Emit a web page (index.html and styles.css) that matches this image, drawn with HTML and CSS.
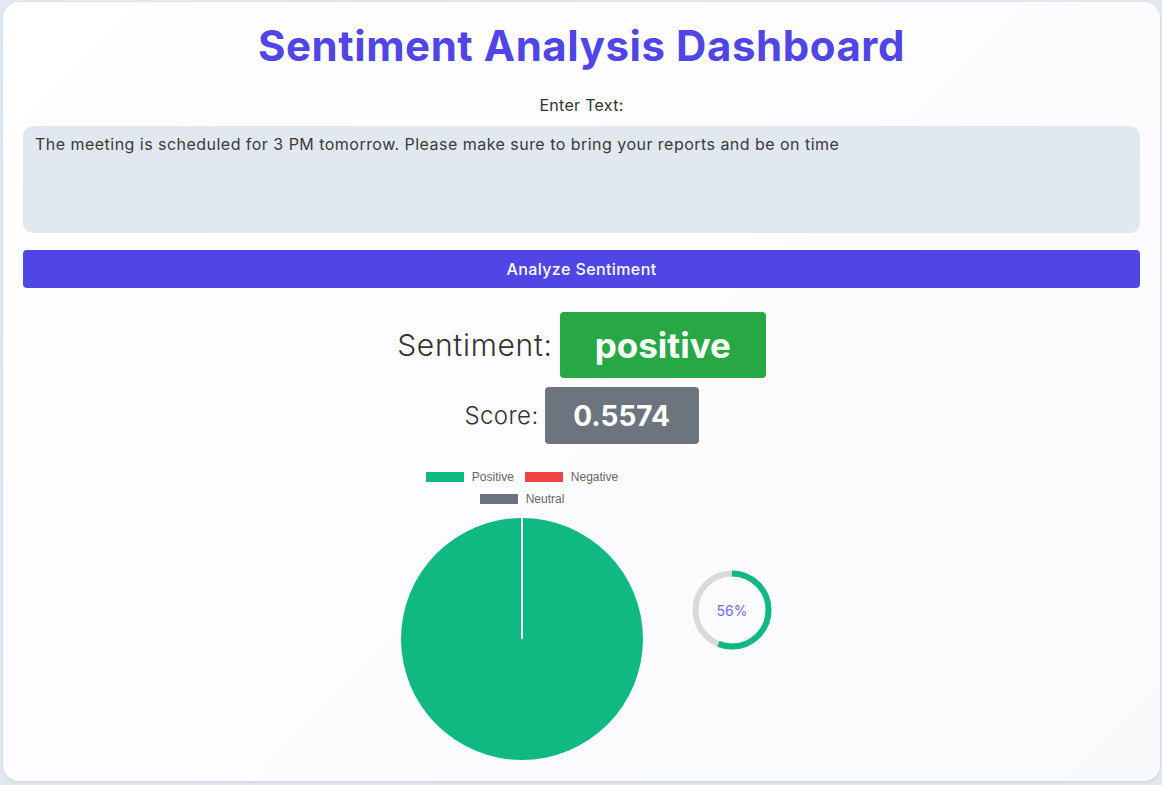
FILE: index.html
```html
<!DOCTYPE html>
<html lang="en">
<head>
<meta charset="utf-8">
<title>Sentiment Analysis Dashboard</title>
<link rel="stylesheet" href="styles.css">
</head>
<body>
<main class="card">
  <h1 class="title">Sentiment Analysis Dashboard</h1>
  <label class="label" for="txt">Enter Text:</label>
  <textarea id="txt" class="input">The meeting is scheduled for 3 PM tomorrow. Please make sure to bring your reports and be on time</textarea>
  <button class="btn">Analyze Sentiment</button>

  <div class="result-row sentiment-row">
    <span class="result-label">Sentiment:</span>
    <span class="badge badge-positive">positive</span>
  </div>
  <div class="result-row score-row">
    <span class="result-label score-label">Score:</span>
    <span class="badge badge-score">0.5574</span>
  </div>

  <div class="charts">
    <div class="pie-col">
      <div class="legend">
        <div class="legend-line">
          <span class="legend-item"><span class="swatch sw-pos"></span>Positive</span>
          <span class="legend-item"><span class="swatch sw-neg"></span>Negative</span>
        </div>
        <div class="legend-line">
          <span class="legend-item"><span class="swatch sw-neu"></span>Neutral</span>
        </div>
      </div>
      <svg class="pie" width="242" height="242" viewBox="0 0 242 242">
        <circle cx="121" cy="121" r="121" fill="#10b981"/>
        <line x1="121" y1="0" x2="121" y2="121" stroke="#ffffff" stroke-width="2"/>
      </svg>
    </div>
    <div class="donut">
      <svg width="80" height="80" viewBox="0 0 80 80">
        <circle cx="40" cy="40" r="36.5" fill="none" stroke="#d9d9d9" stroke-width="6"/>
        <circle cx="40" cy="40" r="36.5" fill="none" stroke="#10b981" stroke-width="6"
          stroke-dasharray="128.4 229.3" transform="rotate(-90 40 40)"/>
      </svg>
      <span class="donut-text">56%</span>
    </div>
  </div>
</main>
</body>
</html>
```

FILE: styles.css
```css
* { box-sizing: border-box; }

html, body {
  margin: 0;
  padding: 0;
}

body {
  background: #e2e8f0;
  font-family: Inter, "Noto Sans", sans-serif;
  color: #333;
  min-height: 785px;
  padding: 2px 2px 4px 3px;
}

.card {
  display: flex;
  flex-direction: column;
  align-items: stretch;
  background: linear-gradient(135deg, #ffffff 0%, #fdfcfe 50%, #f8fafc 100%);
  border-radius: 16px;
  box-shadow: 0 1px 3px rgba(15, 23, 42, 0.12);
  padding: 20px 20px 20px 20px;
  min-height: 779px;
}

.title {
  margin: 0;
  text-align: center;
  color: #4f46e5;
  font-size: 42px;
  line-height: 48px;
  font-weight: 700;
  letter-spacing: 0.55px;
}

.label {
  display: block;
  margin-top: 26px;
  text-align: center;
  font-size: 16px;
  line-height: 18px;
  color: #333;
  letter-spacing: 0.3px;
}

.input {
  display: block;
  margin-top: 12px;
  width: 100%;
  height: 107px;
  background: #e2e8f0;
  border: none;
  border-radius: 10px;
  padding: 7px 12px;
  font-family: Inter, "Noto Sans", sans-serif;
  font-size: 16px;
  line-height: 22px;
  letter-spacing: 0.47px;
  color: #3a3a3a;
  resize: none;
  outline: none;
}

.btn {
  display: block;
  margin-top: 17px;
  width: 100%;
  height: 38px;
  background: #4f46e5;
  color: #ffffff;
  border: none;
  border-radius: 4px;
  font-family: Inter, "Noto Sans", sans-serif;
  font-size: 16px;
  font-weight: 500;
  letter-spacing: 0.4px;
}

.result-row {
  display: flex;
  justify-content: center;
  align-items: center;
}

.sentiment-row {
  margin-top: 24px;
  gap: 7px;
}

.score-row {
  margin-top: 9px;
  gap: 6px;
}

.result-label {
  font-size: 30px;
  font-weight: 300;
  color: #333;
  letter-spacing: 0.7px;
}

.score-label {
  font-size: 24px;
  letter-spacing: 0.4px;
}

.badge {
  display: flex;
  align-items: center;
  justify-content: center;
  color: #ffffff;
  font-weight: 700;
  border-radius: 4px;
}

.badge-positive {
  background: #28a745;
  width: 206px;
  height: 66px;
  font-size: 35px;
}

.badge-score {
  background: #6c757d;
  width: 154px;
  height: 57px;
  font-size: 28px;
}

.charts {
  margin-top: 22px;
  display: flex;
  justify-content: center;
  align-items: center;
  gap: 49px;
  padding-left: 10px;
}

.pie-col {
  width: 242px;
  display: flex;
  flex-direction: column;
  align-items: center;
}

.legend {
  display: flex;
  flex-direction: column;
  align-items: center;
  font-family: "Liberation Sans", Arial, sans-serif;
  font-size: 12px;
  color: #666;
  margin-bottom: 8px;
}

.legend-line {
  display: flex;
  gap: 11px;
  height: 22px;
  align-items: center;
  white-space: nowrap;
}

.legend-item {
  display: flex;
  align-items: center;
  gap: 8px;
}

.swatch {
  display: inline-block;
  width: 38px;
  height: 10px;
}

.sw-pos { background: #10b981; }
.sw-neg { background: #ef4444; }
.sw-neu { background: #6b7280; }

.pie {
  display: block;
}

.donut {
  position: relative;
  width: 80px;
  height: 80px;
  margin-bottom: 6px;
}

.donut svg {
  display: block;
}

.donut-text {
  position: absolute;
  inset: 0;
  display: flex;
  align-items: center;
  justify-content: center;
  font-size: 14px;
  color: #6d6af0;
}
```
